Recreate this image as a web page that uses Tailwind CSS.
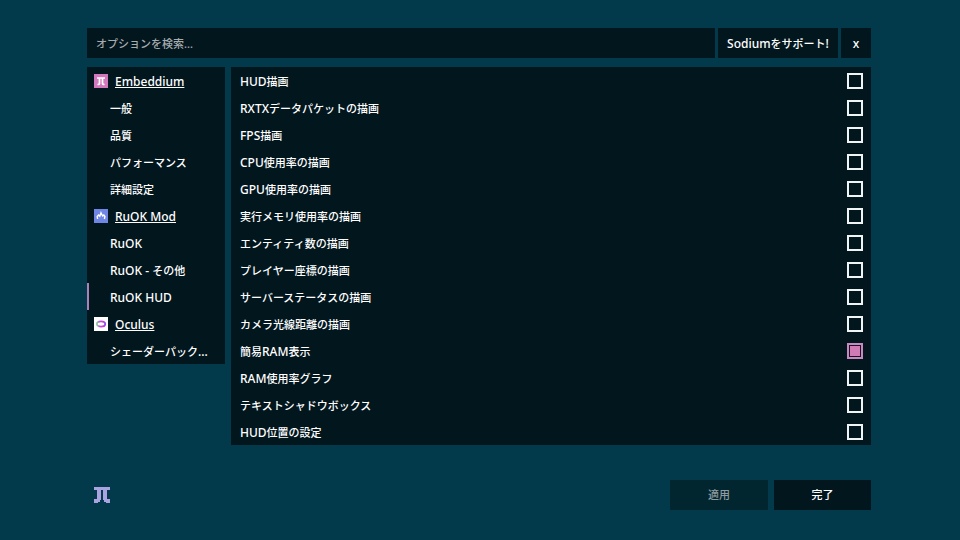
<!DOCTYPE html>
<html lang="ja">

<head>
    <meta charset="UTF-8">
    <meta name="viewport" content="width=device-width, initial-scale=1.0">
    <title>Embeddium</title>
    <!-- Tailwind CSS CDN -->
    <script src="https://cdn.jsdelivr.net/npm/@tailwindcss/browser@4"></script>
</head>

<body class="min-h-screen bg-[#02394b] pt-7 pb-[30px] pl-[87px] pr-[89px] font-['Noto_Sans','Noto_Sans_CJK_JP',sans-serif] text-[11px] font-medium text-white">

    <!-- Search bar -->
    <header class="flex h-[30px] gap-[3px]">
        <input type="text" aria-label="オプションを検索" placeholder="オプションを検索..." class="min-w-0 flex-1 bg-[#02161e] px-[9px] pt-0.5 placeholder:text-[#a6abad] focus:outline-none">
        <button data-label="Sodiumをサポート!" class="w-[120px] bg-[#02161e] pt-0.5 hover:bg-black"></button>
        <button data-label="x" class="w-[30px] bg-[#02161e] pt-0.5 hover:bg-black"></button>
    </header>

    <div class="mt-[9px] flex items-start gap-[6px]">
        <!-- Page list -->
        <nav class="w-[138px] shrink-0 bg-[#02161e]">
            <h2 class="flex h-[27px] items-center gap-[7px] pl-[7px]">
                <svg class="size-[14px]" viewBox="0 0 14 14">
                    <rect width="14" height="14" fill="#d478bd" />
                    <path d="M3 4h8M5.5 4v5.5q0 1-2 1M8.5 4v5.5q0 1 2 1" fill="none" stroke="#fff" stroke-width="1.7" />
                </svg>
                <span class="pt-[3px] underline" data-label="Embeddium"></span>
            </h2>
            <a href="#" data-label="一般" class="flex h-[27px] items-center pt-[3px] pl-[23px]"></a>
            <a href="#" data-label="品質" class="flex h-[27px] items-center pt-[3px] pl-[23px]"></a>
            <a href="#" data-label="パフォーマンス" class="flex h-[27px] items-center pt-[3px] pl-[23px]"></a>
            <a href="#" data-label="詳細設定" class="flex h-[27px] items-center pt-[3px] pl-[23px]"></a>
            <h2 class="flex h-[27px] items-center gap-[7px] pl-[7px]">
                <svg class="size-[14px]" viewBox="0 0 14 14">
                    <rect width="14" height="14" fill="#6f86e4" />
                    <path d="M3.6 10L3.2 7.5L4.6 6L5.8 7.2L7 3.8L8.6 7L9.8 6L10.9 7.5L10.4 10" fill="none" stroke="#fff" stroke-width="1.4" />
                </svg>
                <span class="pt-[3px] underline" data-label="RuOK Mod"></span>
            </h2>
            <a href="#" data-label="RuOK" class="flex h-[27px] items-center pt-[3px] pl-[23px]"></a>
            <a href="#" data-label="RuOK - その他" class="flex h-[27px] items-center pt-[3px] pl-[23px]"></a>
            <a href="#" data-label="RuOK HUD" aria-current="page" class="flex h-[27px] items-center border-l-2 border-[#a982b8] pt-[3px] pl-[21px]"></a>
            <h2 class="flex h-[27px] items-center gap-[7px] pl-[7px]">
                <svg class="size-[14px]" viewBox="0 0 14 14">
                    <defs>
                        <linearGradient id="ring">
                            <stop offset="0" stop-color="#8fd0a0" />
                            <stop offset="0.3" stop-color="#b45cd8" />
                            <stop offset="0.7" stop-color="#d03cc8" />
                            <stop offset="1" stop-color="#8a48f0" />
                        </linearGradient>
                    </defs>
                    <rect width="14" height="14" fill="#fff" />
                    <ellipse cx="7" cy="7" rx="4.2" ry="2.6" fill="none" stroke="url(#ring)" stroke-width="1.8" />
                </svg>
                <span class="pt-[3px] underline" data-label="Oculus"></span>
            </h2>
            <a href="#" data-label="シェーダーパック..." class="flex h-[27px] items-center pt-[3px] pl-[23px]"></a>
        </nav>

        <!-- Options of the selected page -->
        <main id="options" class="min-w-0 flex-1 bg-[#02161e]"></main>
    </div>

    <footer class="mt-[35px] flex h-[30px] items-center gap-[6px]">
        <svg class="mr-auto ml-[7px] size-4" viewBox="0 0 16 16" fill="#a9a4e0">
            <path d="M0 0H16V3H13V12H16V16H12V15H10V13H9V3H7V13H6V15H4V16H0V12H3V3H0Z" />
        </svg>
        <button disabled data-label="適用" class="h-[30px] w-[98px] bg-[#022630] text-[#8e9b9f]"></button>
        <button data-label="完了" class="h-[30px] w-[97px] bg-[#02161e] hover:bg-black"></button>
    </footer>

    <script>
        const options = [
            { name: 'HUD描画' },
            { name: 'RXTXデータパケットの描画' },
            { name: 'FPS描画' },
            { name: 'CPU使用率の描画' },
            { name: 'GPU使用率の描画' },
            { name: '実行メモリ使用率の描画' },
            { name: 'エンティティ数の描画' },
            { name: 'プレイヤー座標の描画' },
            { name: 'サーバーステータスの描画' },
            { name: 'カメラ光線距離の描画' },
            { name: '簡易RAM表示', on: true },
            { name: 'RAM使用率グラフ' },
            { name: 'テキストシャドウボックス' },
            { name: 'HUD位置の設定' }
        ];

        // Latin letters are set one size larger than the kana and kanji
        function label(text) {
            return `<span>${text.replace(/[A-Za-z.!-][A-Za-z.! -]*/g, '<span class="text-xs">$&</span>')}</span>`;
        }

        document.getElementById('options').innerHTML = options.map((option, i) => `
            <div class="flex h-[27px] items-center justify-between pr-2 pl-[9px]">
                <label for="option${i}" class="pt-[3px]">${label(option.name)}</label>
                <input type="checkbox" id="option${i}" ${option.on ? 'checked' : ''} class="size-4 appearance-none border-2 border-[#f0f4f5] checked:border-[#c58abf] checked:bg-[#d07bb5] checked:inset-ring checked:inset-ring-[#1f1227]">
            </div>
        `).join('');

        document.querySelectorAll('[data-label]').forEach(el => {
            el.innerHTML = label(el.dataset.label);
        });
    </script>

</body>

</html>
